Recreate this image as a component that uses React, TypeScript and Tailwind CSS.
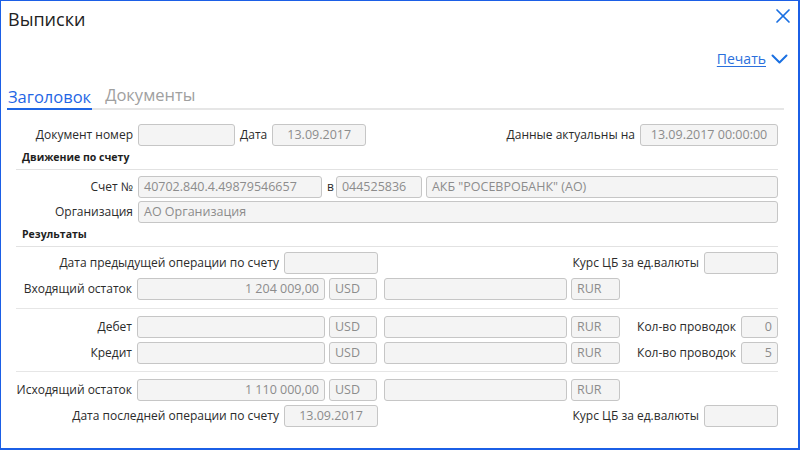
import React from 'react';
import { X } from 'lucide-react';

// Выписки — форма заголовка выписки
function Field({
  value = '',
  w,
  align = 'left',
  className = '',
}: {
  value?: string;
  w: string;
  align?: 'left' | 'right' | 'center';
  className?: string;
}) {
  const alignCls = align === 'right' ? 'justify-end' : align === 'center' ? 'justify-center' : 'justify-start';
  return (
    <div
      className={`h-[22px] ${w} shrink-0 flex items-center ${alignCls} px-[5px] rounded-[3px] border border-[#c6c6c6] bg-[#f4f4f4] text-[12.5px] text-[#8c8c8c] whitespace-nowrap overflow-hidden ${className}`}>
      {value}
    </div>
  );
}

function Label({ children, w = '', className = '' }: { children: React.ReactNode; w?: string; className?: string }) {
  return (
    <div className={`${w} shrink-0 text-right text-[12px] text-[#2b2b2b] whitespace-nowrap ${className}`}>{children}</div>
  );
}

function Section({ title }: { title: string }) {
  return (
    <div className="h-[21px] border-b border-[#e2e2e2] pl-[6px] flex items-end pb-[3px] text-[10.5px] font-bold text-[#1e1e1e]">
      {title}
    </div>
  );
}

function MoneyRow({ label, amount = '', right }: { label: string; amount?: string; right?: React.ReactNode }) {
  return (
    <div className="flex items-center">
      <Label w="w-[116px]">{label}</Label>
      <Field w="w-[188px]" value={amount} align="right" className="ml-[5px]" />
      <Field w="w-[48px]" value="USD" className="ml-[4px]" />
      <Field w="w-[183px]" className="ml-[7px]" />
      <Field w="w-[49px]" value="RUR" className="ml-[4px]" />
      {right}
    </div>
  );
}

export default function App() {
  return (
    <div
      className="w-[800px] h-[450px] bg-white border-t border-l border-r-2 border-b-2 border-[#1b5fe6] overflow-hidden"
      style={{ fontFamily: '"Open Sans", "Noto Sans", sans-serif' }}>
      {/* Header */}
      <div className="flex items-start justify-between pl-[7px] pr-[3px] pt-[4px]">
        <h1 className="text-[18px] leading-[28px] text-[#222]">Выписки</h1>
        <X className="-mt-[1px] text-[#1a70e2]" size={24} strokeWidth={1.7} />
      </div>

      {/* Печать */}
      <div className="flex justify-end items-center pr-[10px] mt-[14px] h-[22px]">
        <a className="text-[14px] text-[#2a6fdc] underline underline-offset-2">Печать</a>
        <svg className="ml-[5px] mt-[1px]" width="17" height="10" viewBox="0 0 17 10" fill="none">
          <polyline points="1.5,1.5 8.5,8.5 15.5,1.5" stroke="#1a70e2" strokeWidth="2" strokeLinecap="round" strokeLinejoin="round" />
        </svg>
      </div>

      {/* Tabs */}
      <div className="ml-[6px] mr-[14px] mt-[15px] flex items-end gap-[13px] border-b-2 border-[#e6e6e6]">
        <div className="text-[16.5px] leading-[22px] text-[#1f66e5] border-b-2 border-[#1f66e5] -mb-[2px] px-[1px]">
          Заголовок
        </div>
        <div className="text-[16.5px] leading-[22px] text-[#a0a0a0] pb-[2px]">Документы</div>
      </div>

      {/* Form */}
      <div className="ml-[15px] w-[762px] mt-[14px]">
        <div className="flex items-center">
          <Label w="w-[117px]">Документ номер</Label>
          <Field w="w-[97px]" className="ml-[5px]" />
          <Label className="ml-[5px]">Дата</Label>
          <Field w="w-[94px]" value="13.09.2017" align="center" className="ml-[5px]" />
          <div className="flex-1" />
          <Label>Данные актуальны на</Label>
          <Field w="w-[138px]" value="13.09.2017 00:00:00" align="center" className="ml-[5px]" />
        </div>

        <div className="mt-[3px]">
          <Section title="Движение по счету" />
        </div>

        <div className="mt-[6px] flex items-center">
          <Label w="w-[117px]">Счет №</Label>
          <Field w="w-[184px]" value="40702.840.4.49879546657" className="ml-[5px]" />
          <Label className="ml-[5px]">в</Label>
          <Field w="w-[86px]" value="044525836" className="ml-[2px]" />
          <Field w="" value='АКБ "РОСЕВРОБАНК" (АО)' className="ml-[4px] flex-1" />
        </div>
        <div className="mt-[3px] flex items-center">
          <Label w="w-[117px]">Организация</Label>
          <Field w="" value="АО Организация" className="ml-[5px] flex-1" />
        </div>

        <div className="mt-[3px]">
          <Section title="Результаты" />
        </div>

        <div className="mt-[5px] flex items-center">
          <Label w="w-[263px]">Дата предыдущей операции по счету</Label>
          <Field w="w-[94px]" className="ml-[5px]" />
          <div className="flex-1" />
          <Label>Курс ЦБ за ед.валюты</Label>
          <Field w="w-[74px]" className="ml-[5px]" />
        </div>
        <div className="mt-[4px]">
          <MoneyRow label="Входящий остаток" amount="1 204 009,00" />
        </div>

        <div className="mt-[8px] border-t border-[#e6e6e6]" />

        <div className="mt-[7px]">
          <MoneyRow
            label="Дебет"
            right={
              <>
                <div className="flex-1" />
                <Label>Кол-во проводок</Label>
                <Field w="w-[37px]" value="0" align="right" className="ml-[5px]" />
              </>
            }
          />
        </div>
        <div className="mt-[4px]">
          <MoneyRow
            label="Кредит"
            right={
              <>
                <div className="flex-1" />
                <Label>Кол-во проводок</Label>
                <Field w="w-[37px]" value="5" align="right" className="ml-[5px]" />
              </>
            }
          />
        </div>

        <div className="mt-[7px] border-t border-[#e6e6e6]" />

        <div className="mt-[7px]">
          <MoneyRow label="Исходящий остаток" amount="1 110 000,00" />
        </div>
        <div className="mt-[4px] flex items-center">
          <Label w="w-[263px]">Дата последней операции по счету</Label>
          <Field w="w-[94px]" value="13.09.2017" align="center" className="ml-[5px]" />
          <div className="flex-1" />
          <Label>Курс ЦБ за ед.валюты</Label>
          <Field w="w-[74px]" className="ml-[5px]" />
        </div>
      </div>
    </div>
  );
}
